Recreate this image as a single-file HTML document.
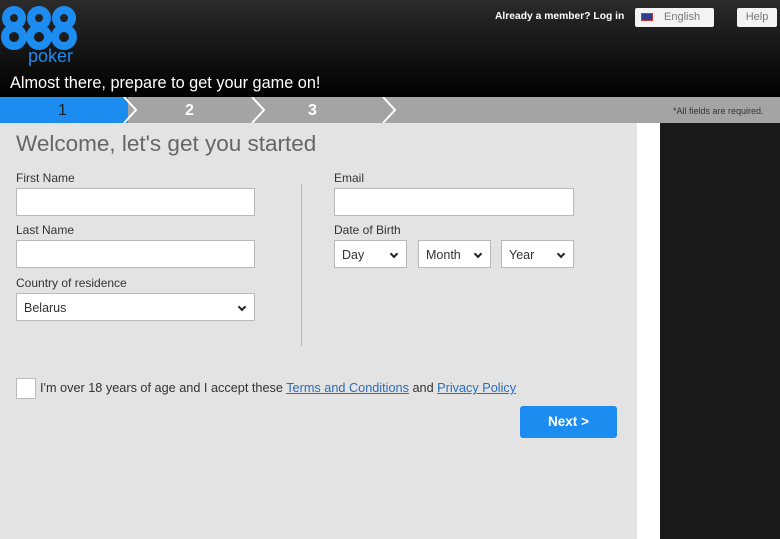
<!DOCTYPE html>
<html><head><style>
*{margin:0;padding:0;box-sizing:border-box}
body{width:780px;height:539px;overflow:hidden;font-family:"Liberation Sans",sans-serif;background:#e3e3e3;position:relative}
.hdr{position:absolute;left:0;top:0;width:780px;height:97px;background:linear-gradient(#2b2b2b,#000)}
.abs{position:absolute}
.lbl{position:absolute;font-size:12px;color:#333}
.inp{position:absolute;background:#fff;border:1px solid #b9b9b9;height:28px}
.sel{position:absolute;background:#fff;border:1px solid #b9b9b9;height:28px;font-size:12.5px;color:#333;padding:7px 0 0 7px}
.sel:after{content:"";position:absolute;right:9px;top:10px;width:4px;height:4px;border-right:2px solid #222;border-bottom:2px solid #222;transform:rotate(45deg)}
a{color:#2a6db8}
</style></head><body>
<div class="hdr"></div>
<svg class="abs" style="left:0;top:6px" width="80" height="46">
<g fill="none" stroke="#1c8cf0" stroke-width="8">
<circle cx="14" cy="12" r="8"/><circle cx="14" cy="31" r="9"/>
<circle cx="39" cy="12" r="8"/><circle cx="39" cy="31" r="9"/>
<circle cx="64" cy="12" r="8"/><circle cx="64" cy="31" r="9"/>
</g></svg>
<div class="abs" style="left:28px;top:46px;color:#1c8cf0;font-size:18px">poker</div>
<div class="abs" style="left:10px;top:74px;color:#fff;font-size:16.3px">Almost there, prepare to get your game on!</div>
<div class="abs" style="left:495px;top:11px;color:#fff;font-size:10.3px;font-weight:bold">Already a member? Log in</div>
<div class="abs" style="left:635px;top:8px;width:79px;height:19px;background:#f3f3f3;border-radius:2px;font-size:11px;color:#777;padding:3px 0 0 29px">English</div>
<div class="abs" style="left:641px;top:13px;width:12px;height:8px;background:#2a3f8f;border:1px solid #c33"></div>
<div class="abs" style="left:737px;top:8px;width:40px;height:19px;background:#f3f3f3;border-radius:2px;font-size:11px;color:#777;text-align:center;padding-top:3px">Help</div>
<div class="abs" style="left:0;top:97px;width:780px;height:26px;background:#a4a4a4"></div>
<div class="abs" style="left:0;top:97px;width:128px;height:26px;background:#1c8cf0"></div>
<svg class="abs" style="left:0;top:97px" width="400" height="26"><g fill="none" stroke="#fff" stroke-width="2"><path d="M124 0 L136 13 L124 26"/><path d="M252 0 L264 13 L252 26"/><path d="M383 0 L395 13 L383 26"/></g></svg>
<div class="abs" style="left:58px;top:102px;font-size:16px;color:#222">1</div>
<div class="abs" style="left:185px;top:102px;font-size:16px;color:#fff;font-weight:bold">2</div>
<div class="abs" style="left:308px;top:102px;font-size:16px;color:#fff;font-weight:bold">3</div>
<div class="abs" style="left:673px;top:106px;font-size:9px;color:#333">*All fields are required.</div>
<div class="abs" style="left:637px;top:123px;width:23px;height:416px;background:#fff"></div>
<div class="abs" style="left:660px;top:123px;width:120px;height:416px;background:#1a1a1a"></div>
<div class="abs" style="left:16px;top:131px;font-size:22.5px;color:#666">Welcome, let's get you started</div>
<div class="lbl" style="left:16px;top:171px">First Name</div>
<div class="inp" style="left:16px;top:188px;width:239px"></div>
<div class="lbl" style="left:16px;top:223px">Last Name</div>
<div class="inp" style="left:16px;top:240px;width:239px"></div>
<div class="lbl" style="left:16px;top:276px">Country of residence</div>
<div class="sel" style="left:16px;top:293px;width:239px">Belarus</div>
<div class="abs" style="left:301px;top:184px;width:1px;height:162px;background:#bbb"></div>
<div class="lbl" style="left:334px;top:171px">Email</div>
<div class="inp" style="left:334px;top:188px;width:240px"></div>
<div class="lbl" style="left:334px;top:223px">Date of Birth</div>
<div class="sel" style="left:334px;top:240px;width:73px">Day</div>
<div class="sel" style="left:418px;top:240px;width:73px">Month</div>
<div class="sel" style="left:501px;top:240px;width:73px">Year</div>
<div class="abs" style="left:16px;top:378px;width:20px;height:21px;background:#fff;border:1px solid #bbb"></div>
<div class="abs" style="left:40px;top:381px;font-size:12.7px;color:#333">I'm over 18 years of age and I accept these <a href="#">Terms and Conditions</a> and <a href="#">Privacy Policy</a></div>
<div class="abs" style="left:520px;top:406px;width:97px;height:32px;background:#1c8cf0;border-radius:3px;color:#fff;font-weight:bold;font-size:13.5px;text-align:center;padding-top:8px">Next &gt;</div>
</body></html>
